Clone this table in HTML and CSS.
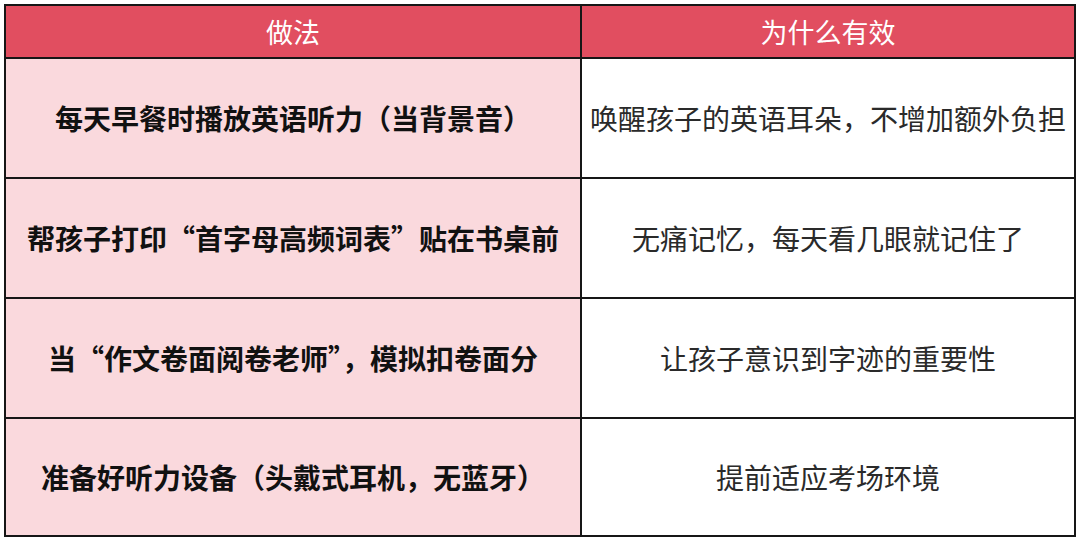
FILE: index.html
```html
<!DOCTYPE html>
<html lang="zh-CN">
<head>
<meta charset="utf-8">
<link rel="stylesheet" href="styles.css">
</head>
<body>
<div class="table">
  <div class="cell head">做法</div>
  <div class="cell head">为什么有效</div>
  <div class="cell how">每天早餐时播放英语听力（当背景音）</div>
  <div class="cell why">唤醒孩子的英语耳朵，不增加额外负担</div>
  <div class="cell how">帮孩子打印“首字母高频词表”贴在书桌前</div>
  <div class="cell why">无痛记忆，每天看几眼就记住了</div>
  <div class="cell how">当“作文卷面阅卷老师”，模拟扣卷面分</div>
  <div class="cell why">让孩子意识到字迹的重要性</div>
  <div class="cell how">准备好听力设备（头戴式耳机，无蓝牙）</div>
  <div class="cell why">提前适应考场环境</div>
</div>
</body>
</html>
```

FILE: styles.css
```css
html, body {
  margin: 0;
  padding: 0;
  background: #ffffff;
}
body {
  padding: 4px;
  font-family: "Noto Sans CJK SC", "Noto Sans", sans-serif;
}
.table {
  width: 1072px;
  box-sizing: border-box;
  display: grid;
  grid-template-columns: 574px 1fr;
  grid-template-rows: 51px 118px 118px 118px 116px;
  gap: 2px;
  padding: 2px;
  background: #161616;
}
.cell {
  display: flex;
  align-items: center;
  justify-content: center;
  font-size: 28px;
  line-height: 1;
  white-space: nowrap;
}
.head {
  background: #e14e60;
  color: #ffffff;
  font-size: 27px;
}
.how {
  background: #fad9dd;
  color: #111111;
  font-weight: 700;
}
.why {
  background: #ffffff;
  color: #2a2a2a;
}
```
